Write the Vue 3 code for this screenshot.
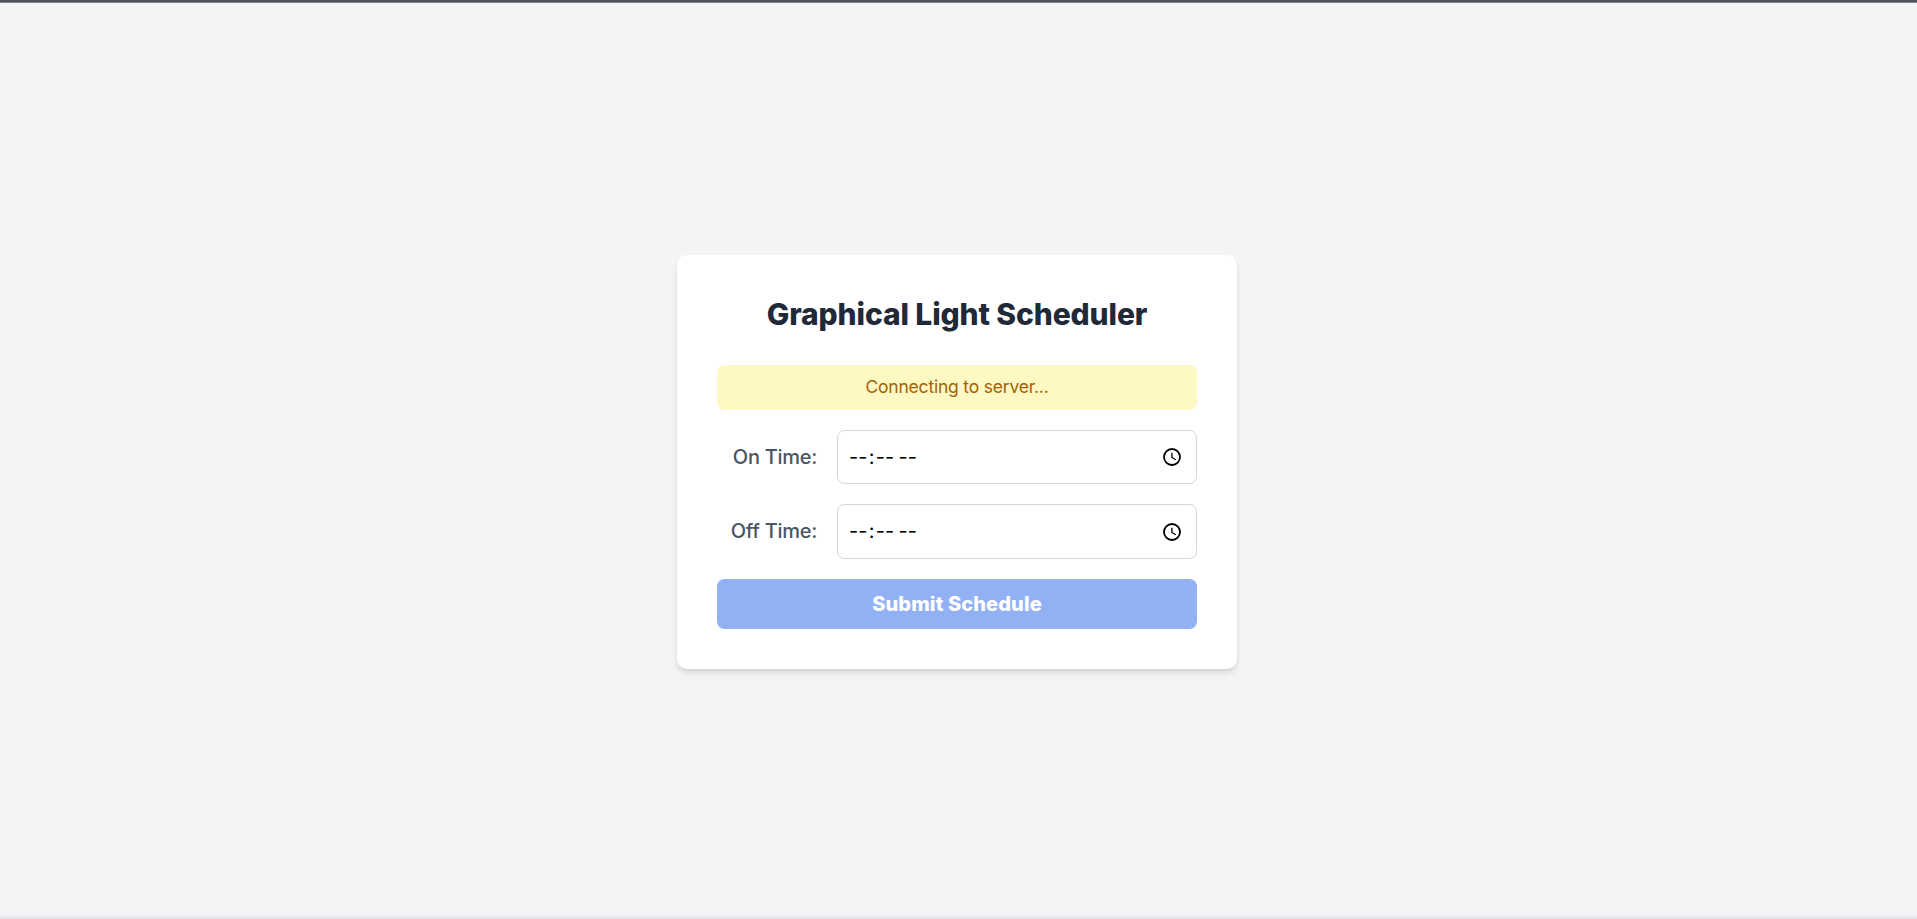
<script setup>
const fields = [
  { id: 'on', label: 'On Time:' },
  { id: 'off', label: 'Off Time:' },
]
</script>

<template>
  <main class="page">
    <section class="card">
      <h1 class="title">Graphical Light Scheduler</h1>
      <p class="status">Connecting to server...</p>
      <form class="form" @submit.prevent>
        <div v-for="f in fields" :key="f.id" class="row" :class="f.id">
          <label class="label">{{ f.label }}</label>
          <div class="field">
            <span class="time"><span>--</span><span class="colon">:</span><span>--</span><span class="space">&nbsp;</span><span>--</span></span>
            <svg class="clock" viewBox="0 0 18 18" fill="none" stroke="#000">
              <circle cx="9" cy="9" r="8" stroke-width="1.8" />
              <path d="M8.9 4.7V9.5L12.8 11.8" stroke-width="1.3" />
            </svg>
          </div>
        </div>
        <button class="submit" type="submit" disabled>Submit Schedule</button>
      </form>
    </section>
  </main>
</template>

<style>
body {
  margin: 0;
  background: #f3f4f6;
}
</style>

<style scoped>
.page {
  box-sizing: border-box;
  height: 919px;
  padding-top: 253px;
  border-top: 2px solid #4c505a;
  background:
    linear-gradient(#81848a, #81848a) top / 100% 1px no-repeat,
    linear-gradient(to top, #dfe1e4 0, #dfe1e4 1px, #eceef0 2px, #f3f4f6 6px);
  font-family: Inter, "Liberation Sans", sans-serif;
  display: flex;
  justify-content: center;
  align-items: flex-start;
}
.card {
  box-sizing: border-box;
  width: 560px;
  height: 414px;
  margin-right: 3px;
  padding: 39px 40px 40px;
  border-radius: 10px;
  background: #fff;
  box-shadow: 0 5px 7.5px -1.25px rgba(0, 0, 0, 0.1), 0 2.5px 5px -2.5px rgba(0, 0, 0, 0.1);
}
.title {
  margin: 0 0 31px;
  font-size: 30px;
  line-height: 40px;
  font-weight: 800;
  letter-spacing: -0.12px;
  color: #1f2937;
  text-align: center;
}
.status {
  margin: 0 0 20px;
  padding: 9px 10px 11px;
  border-radius: 7.5px;
  background: #fef9c3;
  color: #a16207;
  font-size: 17.5px;
  line-height: 25px;
  letter-spacing: -0.2px;
  text-align: center;
}
.form {
  display: flex;
  flex-direction: column;
  gap: 20px;
}
.row {
  display: flex;
  align-items: center;
  gap: 20px;
  height: 54px;
}
.row.off {
  height: 55px;
}
.label {
  width: 100px;
  font-size: 20px;
  line-height: 30px;
  font-weight: 450;
  letter-spacing: -0.28px;
  color: #4b5563;
  text-align: right;
}
.off .label,
.off .time {
  padding-bottom: 1px;
}
.field {
  box-sizing: border-box;
  flex: 1;
  height: 100%;
  padding: 0 15px 0 11px;
  border: 1px solid #d1d5db;
  border-radius: 7.5px;
  display: flex;
  align-items: center;
  justify-content: space-between;
}
.time {
  font-size: 20px;
  color: #000;
  white-space: nowrap;
}
.colon {
  margin: 0 1.3px;
}
.space {
  margin-right: -1.2px;
}
.clock {
  display: block;
  width: 18px;
  height: 18px;
}
.on .clock {
  margin-bottom: 1px;
}
.submit {
  height: 50px;
  padding: 0;
  border: 0;
  border-radius: 7.5px;
  background: #92b1f5;
  color: #fff;
  font: 800 20px/30px Inter, "Liberation Sans", sans-serif;
  letter-spacing: 0.12px;
}
</style>
